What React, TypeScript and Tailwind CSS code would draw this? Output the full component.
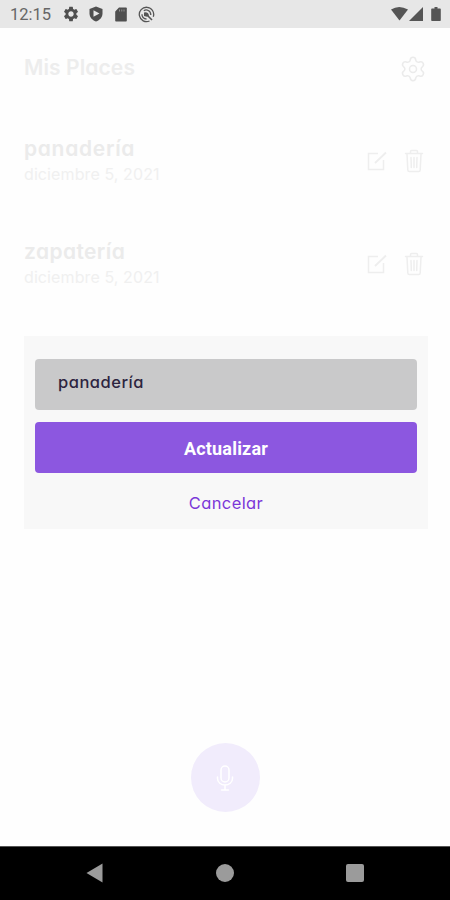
import React from "react";
import { Settings } from "lucide-react";
import { MdSettings } from "react-icons/md";

interface Place {
  id: number;
  name: string;
  date: string;
  nameClass: string;
}

interface PlaceRowProps {
  place: Place;
}

const places: Place[] = [
  { id: 1, name: "panadería", date: "diciembre 5, 2021", nameClass: "tracking-[0.7px]" },
  { id: 2, name: "zapatería", date: "diciembre 5, 2021", nameClass: "tracking-[0.4px]" },
];

const EditIcon = () => (
  <svg width="20" height="20" viewBox="0 0 20 20" fill="none" stroke="currentColor" strokeWidth="1.5">
    <path d="M11 2.500H1.500v16h15V9" />
    <path d="M8 12L19 1.500" strokeWidth="1.800" />
  </svg>
);

const TrashIcon = () => (
  <svg width="20" height="24" viewBox="0 0 20 24" fill="none" stroke="currentColor" strokeWidth="1.500" strokeLinecap="round" strokeLinejoin="round">
    <path d="M1.500 4.500h17M6.500 4.500V2.500q0-1 1-1h5q1 0 1 1v2" />
    <path d="M3 5l.8 16q.1 1.500 1.500 1.500h9.400q1.400 0 1.500-1.500L17 5" />
    <path d="M7 8.500l.3 10M10 8.500v10M13 8.500l-.3 10" />
  </svg>
);

const ShieldIcon = () => (
  <svg width="14" height="16" viewBox="0 0 14 16">
    <path d="M7 .5l6.500 2.500v4.500c0 3.700-2.700 6.700-6.500 8C3.200 14.200.5 11.200.5 7.500V3z" fill="#4f4f4f" />
    <path d="M4.500 4.200L10.500 7.500 4.500 10.800z" fill="#e7e7e7" />
  </svg>
);

const SdIcon = () => (
  <svg width="12" height="15" viewBox="0 0 12 15">
    <path d="M4 .5h7q.8 0 .8.8v12.400q0 .8-.8.8H1q-.8 0-.8-.8V4.500z" fill="#4f4f4f" />
    <path d="M4.500 2.500v2M6.800 2.500v2M9 2.500v2" stroke="#999" strokeWidth=".9" />
  </svg>
);

const SwirlIcon = () => (
  <svg width="17" height="17" viewBox="0 0 17 17" fill="none" stroke="#555" strokeWidth="1.300">
    <path d="M11.500 15A7.200 7.200 0 1 1 15.300 10.800" />
    <path d="M5.800 4.700C8.500 3 12.800 4.500 12.800 9M4 8.200c-.2 2.500 1.500 4.800 4.500 4.800" />
    <path d="M9.500 9.500l4.500 4.500" strokeWidth="1.600" />
    <path d="M6 6.500q4-1 5 3l-2 1.200L6 10z" fill="#555" stroke="none" />
  </svg>
);

const StatusBar = () => (
  <div className="h-7 shrink-0 bg-[#e7e7e7] flex items-center justify-between pl-[10px] pr-2 font-['Roboto',sans-serif]">
    <div className="flex items-center">
      <span className="w-[52px] text-[16.500px] leading-7 pt-px text-[#666]">12:15</span>
      <MdSettings className="w-[18px] h-[18px] text-[#4f4f4f]" />
      <span className="ml-[9px]"><ShieldIcon /></span>
      <span className="ml-3"><SdIcon /></span>
      <span className="ml-[11px]"><SwirlIcon /></span>
    </div>
    <svg width="51" height="16" viewBox="0 0 51 16" fill="#555">
      <path d="M0 3.500Q8-1.500 17 3.500L8.500 14.500z" />
      <path d="M32 1v14H18z" />
      <path d="M43.500 1h3v1.500H49q.8 0 .8.8v11q0 .7-.8.7h-8q-.8 0-.8-.7v-11q0-.8.8-.8h2.500z" />
    </svg>
  </div>
);

const PlaceRow = ({ place }: PlaceRowProps) => (
  <div className="h-[103px] flex items-start justify-between">
    <div>
      <h2 className={`text-[21px] leading-7 font-semibold text-[#ebebeb] ${place.nameClass}`}>{place.name}</h2>
      <p className="-mt-px text-base leading-6 tracking-[0.1px] text-[#f0f0f0]">{place.date}</p>
    </div>
    <div className="flex items-center gap-[17px] pt-[14px] pr-1 text-[#eeeeee]">
      <EditIcon />
      <TrashIcon />
    </div>
  </div>
);

const MicButton = () => (
  <button className="w-[69px] h-[69px] rounded-full bg-[#f1ecfc] flex items-center justify-center">
    <svg width="18" height="26" viewBox="0 0 18 26" fill="none" stroke="#fff" strokeWidth="1.500" strokeLinecap="round">
      <rect x="5" y="1" width="8" height="16" rx="4" />
      <path d="M1.500 12v1.500c0 4 3.500 6.500 7.500 6.500s7.500-2.500 7.500-6.500V12M9 20v5M5.500 25h7" />
    </svg>
  </button>
);

const EditDialog = () => (
  <div className="absolute left-6 right-[22px] top-[308px] h-[193px] bg-[#f8f8f8] px-[11px] pt-[23px] flex flex-col">
    <div className="h-[51px] rounded bg-[#c9c9ca] flex items-center px-[23px] pb-1 text-[16.500px] tracking-[0.5px] font-medium text-[#2d2440]">
      panadería
    </div>
    <button className="mt-3 h-[51px] rounded bg-[#8c57e0] pt-0.5 text-white text-lg tracking-[0.200px] font-bold font-['Roboto',sans-serif]">
      Actualizar
    </button>
    <button className="mt-[18px] leading-6 text-[16.500px] tracking-[0.400px] text-[#7b37d8]">Cancelar</button>
  </div>
);

const NavBar = () => (
  <div className="h-[54px] shrink-0 bg-black border-t border-[#555] flex items-center justify-between pl-[86px] pr-[86px] pb-0.5">
    <svg width="17" height="20" viewBox="0 0 17 20" fill="#9b9b9b">
      <path d="M16.500 .5v19L.5 10z" />
    </svg>
    <span className="w-[18px] h-[18px] rounded-full bg-[#9b9b9b]" />
    <span className="w-[18px] h-[18px] rounded-xs bg-[#9b9b9b]" />
  </div>
);

const App = () => {
  return (
    <div className="w-full h-screen flex flex-col bg-[#fefefe] font-['Inter',sans-serif] [font-feature-settings:'cv11']">
      <StatusBar />
      <main className="relative flex-1 flex flex-col pl-6 pr-[22px]">
        <header className="pt-[26px] flex items-start justify-between">
          <h1 className="text-[21px] leading-7 font-semibold tracking-[0.100px] text-[#ededed]">Mis Places</h1>
          <Settings className="w-7 h-7 mt-px mr-px text-[#ebebeb]" strokeWidth={1.3} />
        </header>
        <section className="mt-[52px]">
          {places.map((place) => (
            <PlaceRow key={place.id} place={place} />
          ))}
        </section>
        <div className="mt-auto mb-[34px] mr-0.5 flex justify-center">
          <MicButton />
        </div>
        <EditDialog />
      </main>
      <NavBar />
    </div>
  );
};

export default App;
